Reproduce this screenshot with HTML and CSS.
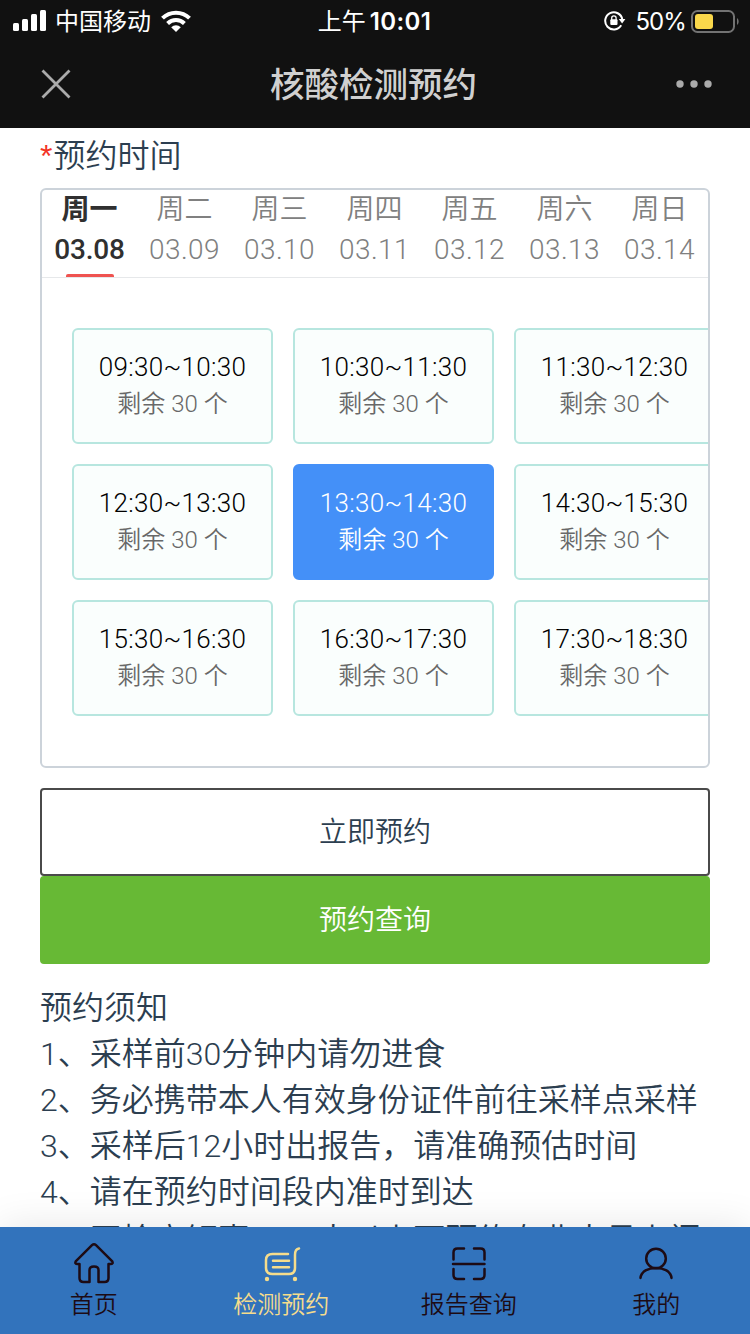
FILE: index.html
```html
<!DOCTYPE html>
<html lang="zh-CN">
<head>
  <meta charset="UTF-8" />
  <meta name="viewport" content="width=device-width, initial-scale=1.0"/>
  <title>核酸检测预约</title>
  <link rel="stylesheet" href="styles.css">
</head>
<body>

<header class="header">
  <div class="status-bar">
    <div class="status-left">
      <svg class="signal" width="34" height="22" viewBox="0 0 34 22" fill="#fff">
        <rect x="0" y="13" width="6" height="8" rx="1.5"/>
        <rect x="9" y="9" width="6" height="12" rx="1.5"/>
        <rect x="18" y="4" width="6" height="17" rx="1.5"/>
        <rect x="27" y="0" width="6" height="21" rx="1.5"/>
      </svg>
      <span class="carrier">中国移动</span>
      <svg class="wifi" width="30" height="22" viewBox="0 0 30 22" fill="none" stroke="#fff" stroke-width="4">
        <path d="M1.5 8.2a19.2 19.2 0 0 1 27 0"/>
        <path d="M6.6 13.5a12 12 0 0 1 16.8 0"/>
        <path d="M15 22l-4.8-4.8a7 7 0 0 1 9.6 0z" fill="#fff" stroke="none"/>
      </svg>
    </div>
    <div class="status-time">上午<b>10:01</b></div>
    <div class="status-right">
      <svg class="lock" width="22" height="20" viewBox="0 0 22 20">
        <path d="M17.2 14.3A8.6 8.6 0 1 1 18.3 8.5" fill="none" stroke="#fff" stroke-width="2"/>
        <path d="M14.8 8h6.6l-3.3 4.4z" fill="#fff"/>
        <rect x="6.3" y="8.3" width="7.2" height="5.8" rx="1" fill="#fff"/>
        <path d="M7.7 9V7a2.2 2.2 0 0 1 4.4 0v2" fill="none" stroke="#fff" stroke-width="1.3"/>
      </svg>
      <span class="percent">50%</span>
      <svg class="battery" width="48" height="23" viewBox="0 0 48 23">
        <rect x="1" y="1" width="42" height="21" rx="5.5" fill="none" stroke="#737373" stroke-width="2"/>
        <rect x="4" y="4" width="18" height="15" rx="3" fill="#fad84b"/>
        <path d="M46 8c2.2 1.5 2.2 5.5 0 7z" fill="#737373"/>
      </svg>
    </div>
  </div>
  <div class="nav-bar">
    <svg width="30" height="30" viewBox="0 0 30 30" stroke="#ababab" stroke-width="2.8">
      <path d="M1.5 1.5l27 27M28.5 1.5l-27 27"/>
    </svg>
    <h1 class="nav-title">核酸检测预约</h1>
    <svg width="36" height="8" viewBox="0 0 36 8" fill="#ababab">
      <circle cx="4" cy="4" r="3.7"/>
      <circle cx="18" cy="4" r="3.7"/>
      <circle cx="32" cy="4" r="3.7"/>
    </svg>
  </div>
</header>

<main class="content">
  <div class="field-label"><span class="required">*</span>预约时间</div>

  <section class="schedule">
    <div class="days">
      <div class="day active"><span>周一</span><span class="date">03.08</span></div>
      <div class="day"><span>周二</span><span class="date">03.09</span></div>
      <div class="day"><span>周三</span><span class="date">03.10</span></div>
      <div class="day"><span>周四</span><span class="date">03.11</span></div>
      <div class="day"><span>周五</span><span class="date">03.12</span></div>
      <div class="day"><span>周六</span><span class="date">03.13</span></div>
      <div class="day"><span>周日</span><span class="date">03.14</span></div>
    </div>
    <div class="slots">
      <div class="slot"><span class="time">09:30~10:30</span><span class="left">剩余 30 个</span></div>
      <div class="slot"><span class="time">10:30~11:30</span><span class="left">剩余 30 个</span></div>
      <div class="slot"><span class="time">11:30~12:30</span><span class="left">剩余 30 个</span></div>
      <div class="slot"><span class="time">12:30~13:30</span><span class="left">剩余 30 个</span></div>
      <div class="slot selected"><span class="time">13:30~14:30</span><span class="left">剩余 30 个</span></div>
      <div class="slot"><span class="time">14:30~15:30</span><span class="left">剩余 30 个</span></div>
      <div class="slot"><span class="time">15:30~16:30</span><span class="left">剩余 30 个</span></div>
      <div class="slot"><span class="time">16:30~17:30</span><span class="left">剩余 30 个</span></div>
      <div class="slot"><span class="time">17:30~18:30</span><span class="left">剩余 30 个</span></div>
    </div>
  </section>

  <button class="btn btn-plain">立即预约</button>
  <button class="btn btn-green">预约查询</button>

  <div class="notice">
    <p>预约须知</p>
    <p>1、采样前30分钟内请勿进食</p>
    <p>2、务必携带本人有效身份证件前往采样点采样</p>
    <p>3、采样后12小时出报告，请准确预估时间</p>
    <p>4、请在预约时间段内准时到达</p>
    <p>5、同检高钜惠，20人以上可预约专业人员上门</p>
  </div>
</main>

<nav class="tab-bar">
  <a class="tab">
    <svg width="44" height="44" viewBox="0 0 44 44">
      <path d="M20 4.2Q22 2.3 24 4.2L40.3 20.4Q41.5 23 38.5 23H36.5V37Q36.5 41 32.5 41H26.5V29Q26.5 25.5 22 25.5T17.5 29V41H11.5Q7.5 41 7.5 37V23H5.5Q2.5 23 3.7 20.4Z"/>
    </svg>
    <span>首页</span>
  </a>
  <a class="tab active">
    <svg width="44" height="44" viewBox="0 0 44 44">
      <path d="M29 13H13.5Q7 13 7 19V27Q7 33 13.5 33H30Q36 33 36 27V14Q36 8 40 7.5M14 19.7h16M14 26.2h16"/>
      <circle class="wheel" cx="8" cy="38" r="2.2"/>
      <circle class="wheel" cx="36" cy="38" r="2.2"/>
    </svg>
    <span>检测预约</span>
  </a>
  <a class="tab">
    <svg width="44" height="44" viewBox="0 0 44 44">
      <path d="M6.5 18.5V11.5Q6.5 7.5 10.5 7.5H17M27 7.5H33.5Q37.5 7.5 37.5 11.5V18.5M6.5 28V34Q6.5 38 10.5 38H17M27 38H33.5Q37.5 38 37.5 34V28M6 23H37.5"/>
    </svg>
    <span>报告查询</span>
  </a>
  <a class="tab">
    <svg width="44" height="44" viewBox="0 0 44 44">
      <circle cx="22" cy="17.5" r="9.8"/>
      <path d="M6.5 37C7.5 23.5 36.5 23.5 37.5 37"/>
    </svg>
    <span>我的</span>
  </a>
</nav>

</body>
</html>
```
FILE: styles.css
```css
* {
  box-sizing: border-box;
}

body {
  margin: 0;
  height: 1334px;
  display: flex;
  flex-direction: column;
  overflow: hidden;
  background: #fff;
  color: #2c3e50;
  font-family: Roboto, 'Noto Sans CJK SC', sans-serif;
  font-weight: 350;
}

svg {
  display: block;
  flex: none;
}

.header {
  height: 128px;
  flex: none;
  background: #111;
  color: #fff;
}

.status-bar {
  height: 40px;
  display: grid;
  grid-template-columns: 1fr auto 1fr;
  align-items: center;
  padding: 0 11px 0 13px;
  font-family: Inter, 'Noto Sans CJK SC', sans-serif;
  font-size: 24px;
  font-weight: 400;
  line-height: 40px;
}

.status-left,
.status-right {
  display: flex;
  align-items: center;
}

.status-right {
  justify-content: flex-end;
}

.carrier {
  margin: 2px 10px 0 8px;
}

.status-time {
  margin-left: -3px;
  padding-top: 2px;
}

.status-time b {
  margin-left: 4px;
  font-weight: 600;
  letter-spacing: 0.4px;
}

.lock {
  margin-right: 9px;
}

.percent {
  margin: 2px 5px 0 0;
  letter-spacing: -0.9px;
}

.nav-bar {
  height: 88px;
  display: flex;
  align-items: center;
  justify-content: space-between;
  padding: 0 38px 0 41px;
}

.nav-title {
  margin: 2px 0 0;
  font-size: 34.5px;
  font-weight: 500;
  line-height: 88px;
  color: #d0d0d0;
}

.content {
  flex: 1;
  min-height: 0;
  padding: 5px 40px 0;
}

.field-label {
  height: 55px;
  font-size: 32px;
  line-height: 46px;
}

.required {
  margin-right: 1px;
  font-family: 'Liberation Sans', sans-serif;
  color: #f33325;
}

.schedule {
  height: 580px;
  border: 2px solid #ccd3da;
  border-radius: 6px;
  overflow: hidden;
}

.days {
  display: grid;
  grid-template-columns: repeat(7, 95px);
  height: 88px;
  border-bottom: 1px solid #e6e8ea;
}

.day {
  display: flex;
  flex-direction: column;
  align-items: center;
  font-size: 28px;
  line-height: 40px;
  color: #808080;
}

.date {
  line-height: 39px;
  letter-spacing: 0.4px;
}

.day.active {
  font-weight: 700;
  color: #303030;
}

.day.active .date {
  font-weight: 500;
  letter-spacing: -0.2px;
}

.day.active::after {
  content: '';
  width: 48px;
  height: 3px;
  margin-top: 5px;
  border-radius: 2px 2px 0 0;
  background: #ef5350;
}

.slots {
  display: grid;
  grid-template-columns: repeat(3, 201px);
  grid-auto-rows: 116px;
  gap: 20px;
  padding: 50px 30px;
}

.slot {
  display: flex;
  flex-direction: column;
  align-items: center;
  padding-top: 19px;
  border: 2px solid #b7e6df;
  border-radius: 6px;
  background: #fafefd;
}

.time {
  font-size: 26px;
  line-height: 36px;
  letter-spacing: 0.3px;
  color: #000;
}

.left {
  font-size: 24px;
  line-height: 38px;
  color: #686868;
}

.slot.selected {
  border-color: #4490f8;
  background: #4490f8;
}

.slot.selected .time,
.slot.selected .left {
  color: #fff;
}

.btn {
  display: block;
  width: 100%;
  height: 88px;
  padding: 0 0 5px;
  border: 2px solid #4a4a4a;
  border-radius: 4px;
  background: #fff;
  color: #2c3e50;
  font-family: inherit;
  font-size: 28px;
  font-weight: inherit;
}

.btn-plain {
  margin-top: 20px;
}

.btn-green {
  border-color: #67b935;
  background: #67b935;
  color: #fff;
}

.notice {
  margin-top: 21px;
  font-size: 32px;
  line-height: 46px;
  white-space: nowrap;
}

.notice p {
  margin: 0;
}

.notice p:last-child {
  padding-top: 2px;
}

.tab-bar {
  position: relative;
  height: 107px;
  flex: none;
  display: grid;
  grid-template-columns: repeat(4, 1fr);
  background: #3273bc;
  box-shadow: 0 0 40px rgba(0, 0, 0, 0.1);
}

.tab {
  display: flex;
  flex-direction: column;
  align-items: center;
  padding-top: 14px;
  font-size: 24px;
  line-height: 40px;
  color: #1d0b14;
}

.tab svg {
  fill: none;
  stroke: currentColor;
  stroke-width: 2.5;
  stroke-linecap: round;
  stroke-linejoin: round;
}

.tab .wheel {
  fill: currentColor;
  stroke: none;
}

.tab.active {
  color: #f5dc8c;
}
```
